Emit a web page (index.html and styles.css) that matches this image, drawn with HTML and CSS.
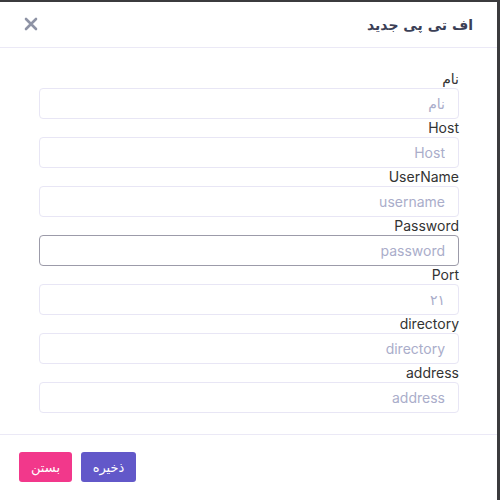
FILE: index.html
```html
<!DOCTYPE html>
<html lang="fa">
<head>
<meta charset="utf-8">
<link rel="stylesheet" href="styles.css">
</head>
<body>
<div class="modal" dir="rtl">
  <div class="modal-header">
    <h5 class="modal-title">اف تی پی جدید</h5>
    <span class="close">
      <svg width="14" height="14" viewBox="0 0 14 14"><path d="M2 2L12 12M12 2L2 12" stroke="#8e93a5" stroke-width="2.6" stroke-linecap="round"/></svg>
    </span>
  </div>
  <div class="modal-body">
    <div class="field"><label>نام</label><input class="input" placeholder="نام"></div>
    <div class="field"><label>Host</label><input class="input" placeholder="Host"></div>
    <div class="field"><label>UserName</label><input class="input" placeholder="username"></div>
    <div class="field"><label>Password</label><input class="input focused" placeholder="password"></div>
    <div class="field"><label>Port</label><input class="input" placeholder="۲۱"></div>
    <div class="field"><label>directory</label><input class="input" placeholder="directory"></div>
    <div class="field"><label>address</label><input class="input" placeholder="address"></div>
  </div>
  <div class="modal-footer">
    <button class="btn btn-save">ذخیره</button>
    <button class="btn btn-close">بستن</button>
  </div>
</div>
</body>
</html>
```

FILE: styles.css
```css
html, body {
  margin: 0;
  padding: 0;
  background: #3b3b3d;
  height: 100%;
}
body {
  font-family: Inter, "DejaVu Sans", sans-serif;
  overflow: hidden;
}
.modal {
  width: 497px;
  height: 498px;
  margin-top: 2px;
  background: #fff;
  display: flex;
  flex-direction: column;
}
.modal-header {
  height: 46px;
  box-sizing: border-box;
  border-bottom: 1px solid #ebe9f6;
  display: flex;
  align-items: center;
  justify-content: space-between;
  padding: 0 24px 0 24px;
}
.modal-title {
  margin: 0;
  font-size: 14px;
  font-weight: bold;
  color: #3b4056;
  font-family: "DejaVu Sans", sans-serif;
}
.close {
  display: flex;
  margin-top: -2px;
}
.modal-body {
  padding: 22px 38px 21px 39px;
  display: flex;
  flex-direction: column;
}
.field {
  display: flex;
  flex-direction: column;
}
.field label {
  height: 18px;
  line-height: 18px;
  font-size: 14px;
  color: #333;
  text-align: right;
  direction: ltr;
}
.input {
  height: 31px;
  box-sizing: border-box;
  border: 1px solid #e8e6f5;
  border-radius: 4px;
  padding: 0 13px;
  font-family: Inter, "DejaVu Sans", sans-serif;
  font-size: 14px;
  text-align: right;
  outline: none;
  background: #fff;
}
.input.focused {
  border-color: #9c9ba9;
}
.input::placeholder {
  color: #aaadca;
}
.modal-footer {
  margin-top: auto;
  border-top: 1px solid #ebe9f6;
  padding: 17px 19px 16px;
  display: flex;
  justify-content: flex-end;
  gap: 9px;
  height: 66px;
  box-sizing: border-box;
}
.btn {
  height: 30px;
  border: none;
  border-radius: 3px;
  color: #fff;
  font-family: "DejaVu Sans", sans-serif;
  font-size: 13px;
  padding: 0 10px;
}
.btn-save {
  background: #6258c9;
  width: 55px;
}
.btn-close {
  background: #f2388b;
  width: 53px;
}
```
